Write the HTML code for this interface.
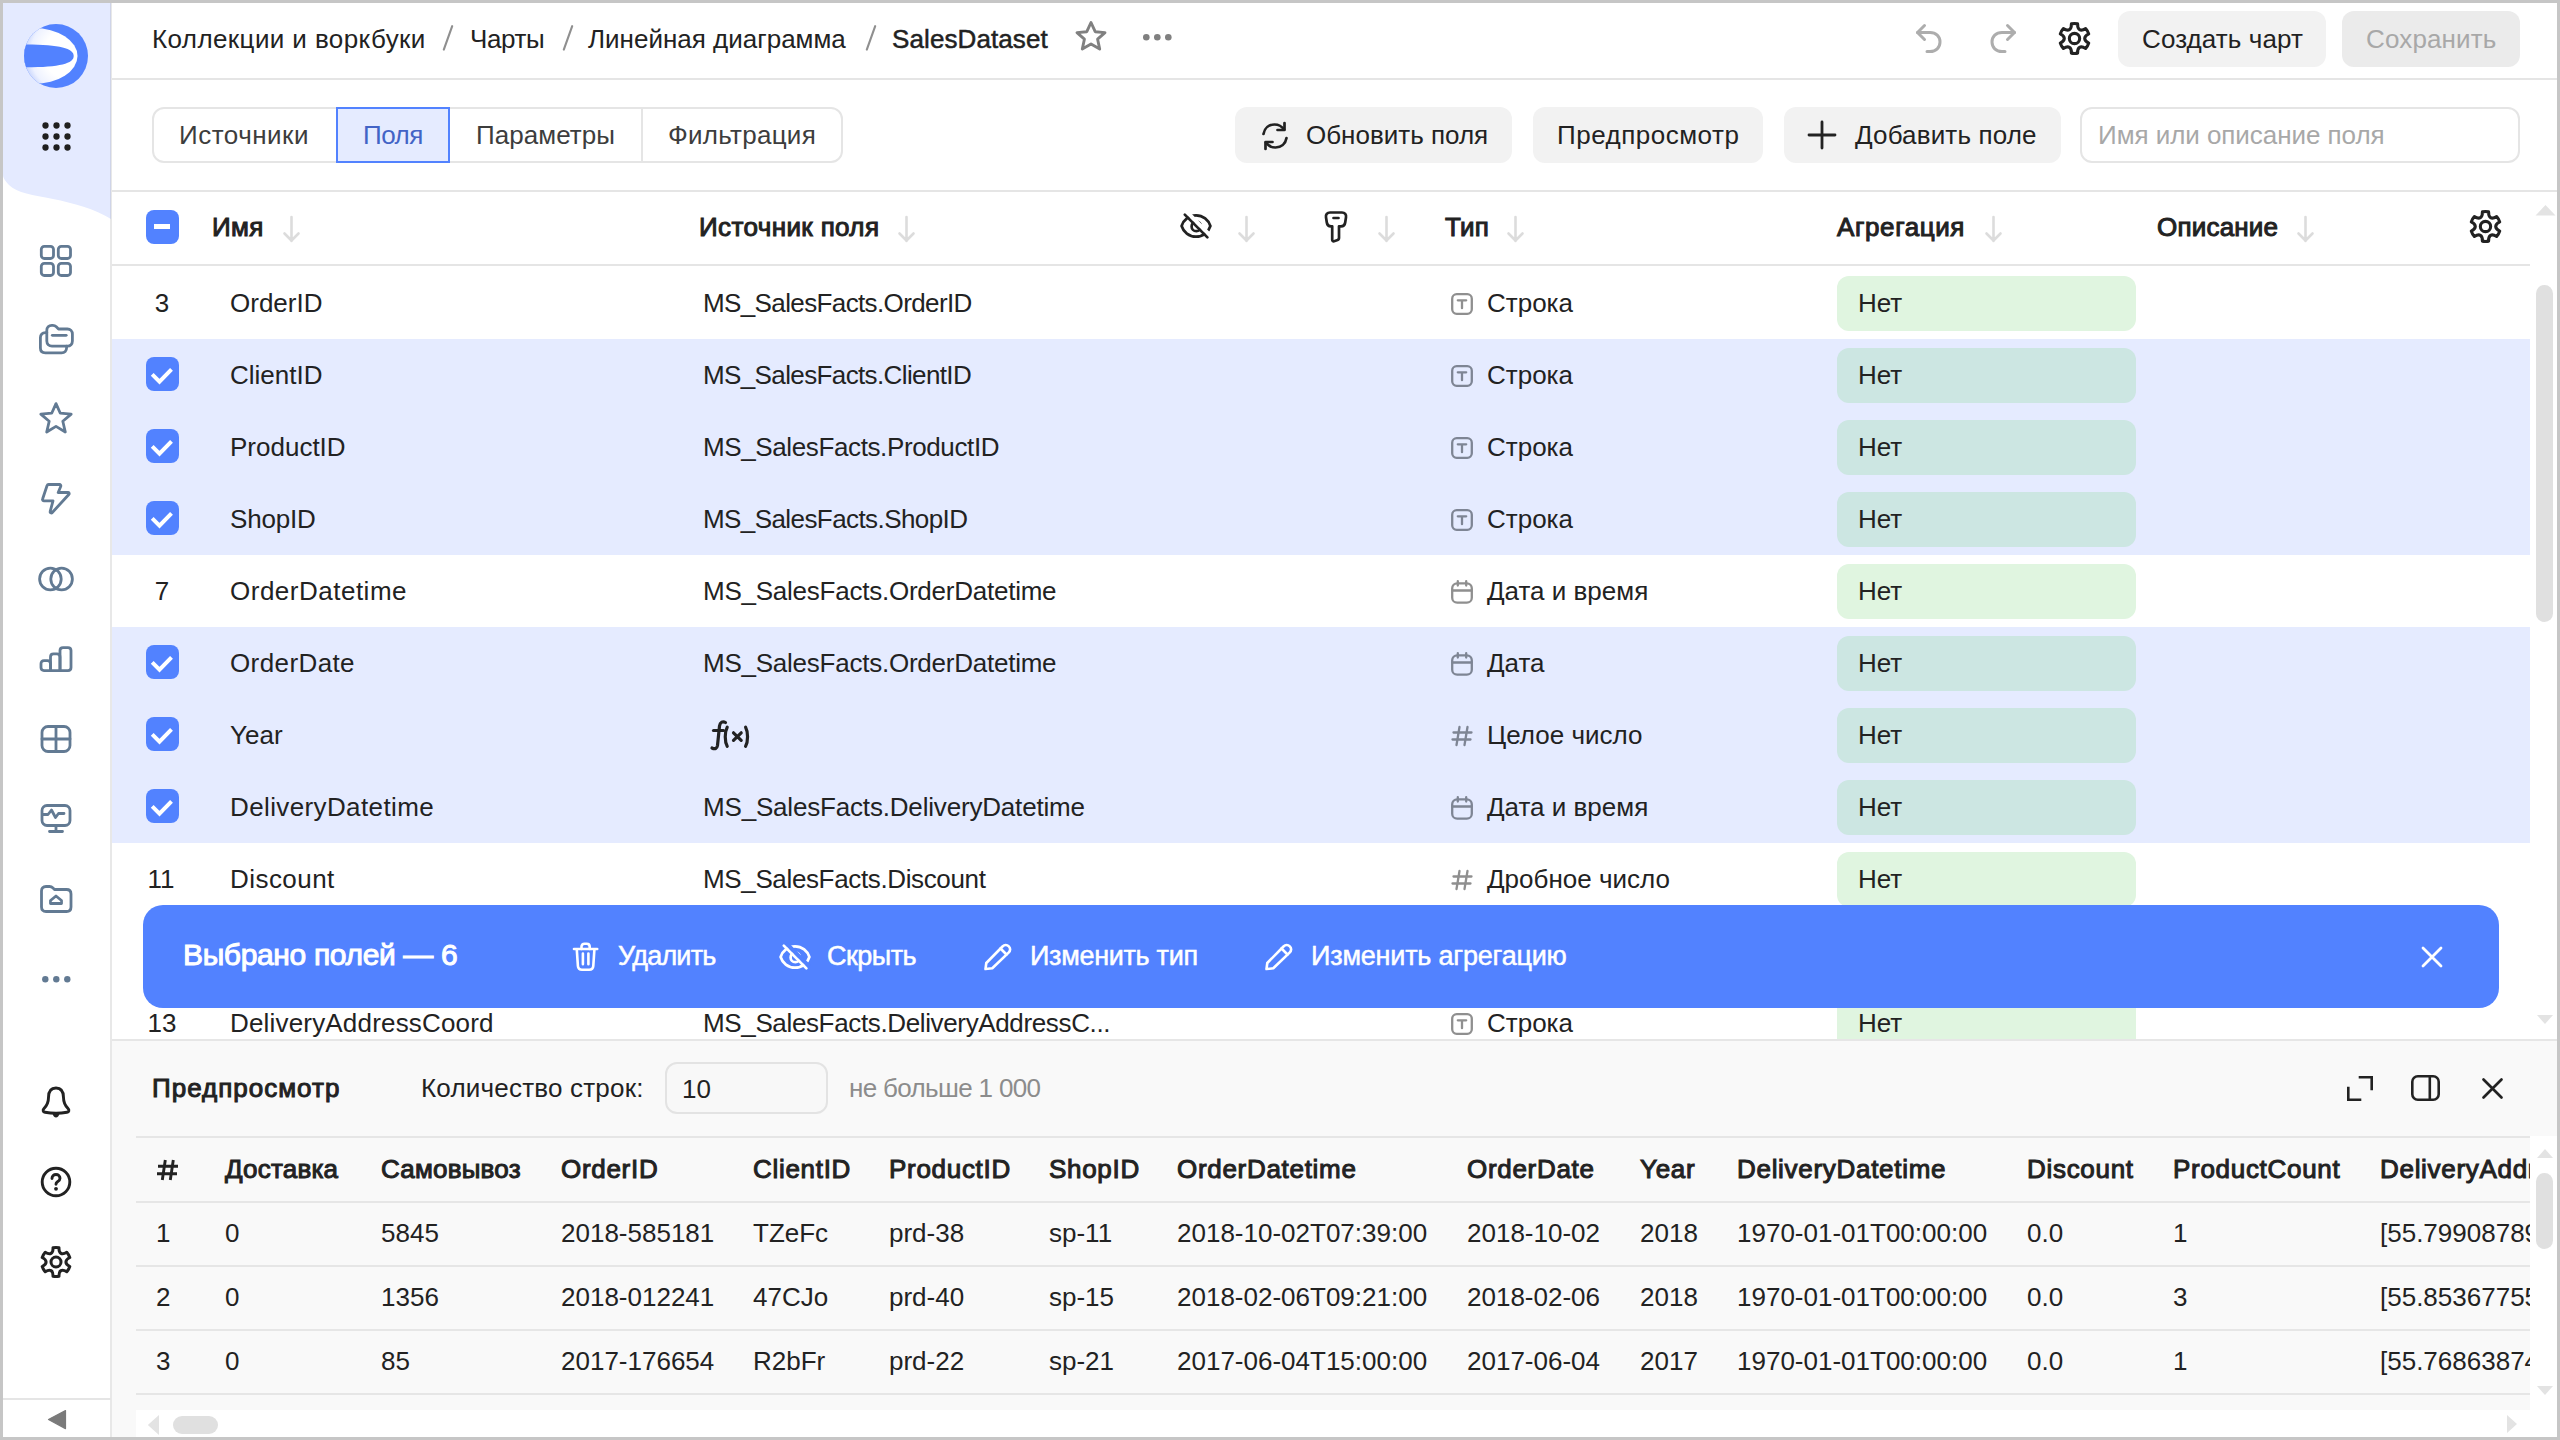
<!DOCTYPE html><html><head><meta charset="utf-8"><style>
*{box-sizing:border-box;margin:0;padding:0}
html,body{width:2560px;height:1440px;overflow:hidden;background:#c6c6c6}
body{font-family:"Liberation Sans",sans-serif;position:relative}
.t{position:absolute;white-space:pre;line-height:1}
.abs{position:absolute}
svg{position:absolute;overflow:visible}
</style></head><body>

<div class="abs" style="left:3px;top:3px;width:2554px;height:1434px;background:#fff;"></div>
<svg style="left:3px;top:3px;" width="109" height="220" viewBox="0 0 109 220"><path d="M0 0 H108 V216 C92 206 70 200 50 196 C30 192 14 190 6 182 C3 179 0 175 0 172 Z" fill="#e4eaff"/></svg>
<div class="abs" style="left:110px;top:3px;width:2px;height:1434px;background:rgba(0,0,0,0.09);"></div>
<svg style="left:24px;top:24px;" width="64" height="64" viewBox="0 0 64 64">
<defs><radialGradient id="lg" gradientUnits="userSpaceOnUse" cx="44" cy="30" r="44"><stop offset="0" stop-color="#fff"/><stop offset="0.55" stop-color="#fff"/><stop offset="0.85" stop-color="#eef2ff"/><stop offset="1" stop-color="#c9d6fc"/></radialGradient>
<clipPath id="lc"><circle cx="32" cy="32" r="32"/></clipPath></defs>
<circle cx="32" cy="32" r="32" fill="#5282ff"/>
<g clip-path="url(#lc)">
<ellipse cx="10" cy="32" rx="43.5" ry="28" fill="url(#lg)"/>
<path d="M-2 20.5 H2 C36 20.5 49.7 24.5 49.7 32 C49.7 39.5 36 43.3 2 43.3 H-2 Z" fill="#5282ff"/>
</g>
</svg>
<svg style="left:41.5px;top:121.5px;" width="7" height="7" viewBox="0 0 7 7"><circle cx="3.5" cy="3.5" r="3.15" fill="#1f1f1f"/></svg>
<svg style="left:41.5px;top:132.5px;" width="7" height="7" viewBox="0 0 7 7"><circle cx="3.5" cy="3.5" r="3.15" fill="#1f1f1f"/></svg>
<svg style="left:41.5px;top:143.5px;" width="7" height="7" viewBox="0 0 7 7"><circle cx="3.5" cy="3.5" r="3.15" fill="#1f1f1f"/></svg>
<svg style="left:52.5px;top:121.5px;" width="7" height="7" viewBox="0 0 7 7"><circle cx="3.5" cy="3.5" r="3.15" fill="#1f1f1f"/></svg>
<svg style="left:52.5px;top:132.5px;" width="7" height="7" viewBox="0 0 7 7"><circle cx="3.5" cy="3.5" r="3.15" fill="#1f1f1f"/></svg>
<svg style="left:52.5px;top:143.5px;" width="7" height="7" viewBox="0 0 7 7"><circle cx="3.5" cy="3.5" r="3.15" fill="#1f1f1f"/></svg>
<svg style="left:63.5px;top:121.5px;" width="7" height="7" viewBox="0 0 7 7"><circle cx="3.5" cy="3.5" r="3.15" fill="#1f1f1f"/></svg>
<svg style="left:63.5px;top:132.5px;" width="7" height="7" viewBox="0 0 7 7"><circle cx="3.5" cy="3.5" r="3.15" fill="#1f1f1f"/></svg>
<svg style="left:63.5px;top:143.5px;" width="7" height="7" viewBox="0 0 7 7"><circle cx="3.5" cy="3.5" r="3.15" fill="#1f1f1f"/></svg>
<svg style="left:40px;top:245px;" width="32" height="32" viewBox="0 0 32 32"><g fill="none" stroke="#627a93" stroke-width="2.8" stroke-linecap="round" stroke-linejoin="round"><rect x="1.3" y="1.3" width="12.2" height="12.2" rx="3"/><rect x="18.3" y="1.3" width="12.2" height="12.2" rx="3"/><rect x="1.3" y="18.3" width="12.2" height="12.2" rx="3"/><rect x="18.3" y="18.3" width="12.2" height="12.2" rx="3"/></g></svg>
<svg style="left:39px;top:324px;" width="36" height="32" viewBox="0 0 36 32"><g fill="none" stroke="#627a93" stroke-width="2.8" stroke-linecap="round" stroke-linejoin="round"><path d="M7.8 10 V17 C7.8 20 10 22.1 13 22.1 H28.4 C31.4 22.1 33.4 20 33.4 17 V10 C33.4 7 31.4 5 28.4 5 H19.5 L17.3 2.8 C16.5 2 15.3 1.4 13.8 1.4 H12.8 C9.8 1.4 7.8 3.5 7.8 6.5 Z"/><path d="M7.8 8.6 H6.4 C3.4 8.6 1.4 10.6 1.4 13.6 V24 C1.4 27 3.4 28.8 6.4 28.8 H22.6 C25.6 28.8 27.6 26.8 27.6 23.8 V22.1"/><path d="M13.3 11.3 H27.2"/></g></svg>
<svg style="left:39px;top:401px;" width="34" height="34" viewBox="0 0 34 34"><path fill="none" stroke="#627a93" stroke-width="2.8" stroke-linecap="round" stroke-linejoin="round" d="M17 2.6 L21.3 12.2 L32.2 13.1 L23.8 20.3 L26.3 31 L17 25.4 L7.7 31 L10.2 20.3 L1.8 13.1 L12.7 12.2 Z"/></svg>
<svg style="left:40px;top:482px;" width="32" height="34" viewBox="0 0 32 34"><path fill="none" stroke="#627a93" stroke-width="2.8" stroke-linecap="round" stroke-linejoin="round" d="M8.5 2.5 H19.5 C20.5 2.5 21 3.3 20.8 4.2 L18.2 10.5 H28 C29 10.5 29.6 11.6 28.8 12.5 L12.3 30.5 C11.3 31.6 9.8 30.6 10.2 29.4 L13 18.8 H4 C3 18.8 2.2 18 2.6 17 L7 3.8 C7.3 3 7.8 2.5 8.5 2.5 Z"/></svg>
<svg style="left:38px;top:566px;" width="36" height="26" viewBox="0 0 36 26"><g fill="none" stroke="#627a93" stroke-width="2.8" stroke-linecap="round" stroke-linejoin="round"><circle cx="12.4" cy="13" r="10.8"/><circle cx="23.6" cy="13" r="10.8"/></g></svg>
<svg style="left:39px;top:645px;" width="34" height="28" viewBox="0 0 34 28"><g fill="none" stroke="#627a93" stroke-width="2.8" stroke-linecap="round" stroke-linejoin="round"><path d="M21 25.6 H29 C31 25.6 32 24.6 32 22.6 V5.6 C32 3.6 31 2.6 29 2.6 H24 C22 2.6 21 3.6 21 5.6 Z"/><path d="M11.5 25.6 H21 V11.9 C21 9.9 20 8.9 18 8.9 H14.5 C12.5 8.9 11.5 9.9 11.5 11.9 Z"/><path d="M11.5 25.6 H5 C3 25.6 2 24.6 2 22.6 V18.7 C2 16.7 3 15.7 5 15.7 H8.5 C10.5 15.7 11.5 16.7 11.5 18.7 Z"/></g></svg>
<svg style="left:40px;top:725px;" width="32" height="28" viewBox="0 0 32 28"><g fill="none" stroke="#627a93" stroke-width="2.8" stroke-linecap="round" stroke-linejoin="round"><rect x="2" y="1.5" width="28" height="25" rx="6"/><path d="M16 1.5 V26.5 M2 14 H30"/></g></svg>
<svg style="left:40px;top:804px;" width="32" height="30" viewBox="0 0 32 30"><g fill="none" stroke="#627a93" stroke-width="2.8" stroke-linecap="round" stroke-linejoin="round"><rect x="2" y="1.5" width="28" height="20" rx="5"/><path d="M16 21.5 V27 M9.5 27.5 H22.5"/><path d="M3 10.5 H8 L11.5 6 L15.5 13.5 L18.5 9.5 H24"/></g></svg>
<svg style="left:39px;top:884px;" width="34" height="30" viewBox="0 0 34 30"><g fill="none" stroke="#627a93" stroke-width="2.8" stroke-linecap="round" stroke-linejoin="round"><path d="M2.5 7 C2.5 4 4 2.5 7 2.5 H10.5 C12 2.5 13 3 14 4 L15.5 5.5 H27.5 C30.5 5.5 32 7 32 10 V23 C32 26 30.5 27.5 27.5 27.5 H7 C4 27.5 2.5 26 2.5 23 Z"/><path d="M11.5 19.5 V16.5 L17 12 L22.5 16.5 V19.5 Z"/></g></svg>
<svg style="left:41.7px;top:976.0px;" width="7" height="7" viewBox="0 0 7 7"><circle cx="3.3" cy="3.3" r="3.2" fill="#627a93"/></svg>
<svg style="left:52.7px;top:976.0px;" width="7" height="7" viewBox="0 0 7 7"><circle cx="3.3" cy="3.3" r="3.2" fill="#627a93"/></svg>
<svg style="left:63.7px;top:976.0px;" width="7" height="7" viewBox="0 0 7 7"><circle cx="3.3" cy="3.3" r="3.2" fill="#627a93"/></svg>
<svg style="left:40px;top:1086px;" width="32" height="34" viewBox="0 0 32 34"><g fill="none" stroke="#222" stroke-width="2.9" stroke-linecap="round" stroke-linejoin="round"><path d="M16 2 C10.5 2 8.5 6.5 8.5 11.5 C8.5 16 7 19.5 4 22.5 C2.5 24 3 26 5 26.3 C12 27.5 20 27.5 27 26.3 C29 26 29.5 24 28 22.5 C25 19.5 23.5 16 23.5 11.5 C23.5 6.5 21.5 2 16 2 Z"/></g><path d="M12.5 27.5 C13 30 14.5 31.5 16 31.5 C17.5 31.5 19 30 19.5 27.5 Z" fill="#222"/></svg>
<svg style="left:40px;top:1166px;" width="32" height="32" viewBox="0 0 32 32"><g fill="none" stroke="#222" stroke-width="2.9" stroke-linecap="round" stroke-linejoin="round"><circle cx="16" cy="16" r="13.8"/><path d="M12 12.5 C12 10 13.8 8.5 16 8.5 C18.2 8.5 20 10 20 12.3 C20 14.5 18.5 15.2 17.2 16 C16.3 16.6 16 17.2 16 18.3"/></g><circle cx="16" cy="22.8" r="1.9" fill="#222"/></svg>
<svg style="left:40px;top:1246px;" width="32" height="32" viewBox="0 0 32 32"><g transform="scale(1.0)" fill="none" stroke="#222" stroke-width="3.0" stroke-linejoin="round"><path d="M12.99 1.82 A14.5 14.5 0 0 1 19.01 1.82 C18.72 7.63 21.89 9.46 26.78 6.30 A14.5 14.5 0 0 1 29.79 11.52 C24.61 14.17 24.61 17.83 29.79 20.48 A14.5 14.5 0 0 1 26.78 25.70 C21.89 22.54 18.72 24.37 19.01 30.18 A14.5 14.5 0 0 1 12.99 30.18 C13.28 24.37 10.11 22.54 5.22 25.70 A14.5 14.5 0 0 1 2.21 20.48 C7.39 17.83 7.39 14.17 2.21 11.52 A14.5 14.5 0 0 1 5.22 6.30 C10.11 9.46 13.28 7.63 12.99 1.82 Z"/><circle cx="16" cy="16" r="5.0"/></g></svg>
<div class="abs" style="left:3px;top:1398px;width:108px;height:2px;background:#e5e5e5;"></div>
<svg style="left:46px;top:1408px;" width="22" height="24" viewBox="0 0 22 24"><path d="M2.5 11.5 L19.5 2.6 V20.6 Z" fill="#7a7a7a" stroke="#7a7a7a" stroke-width="1.2" stroke-linejoin="round"/></svg>
<div class="abs" style="left:112px;top:78px;width:2445px;height:2px;background:#e5e5e5;"></div>
<div class="t" style="left:152px;top:25.99px;font-size:26px;color:#222222;font-weight:400;letter-spacing:0.4px;">Коллекции и воркбуки</div>
<svg style="left:441.5px;top:25px;" width="12" height="26" viewBox="0 0 12 26"><path d="M10.2 1.2 L1.8 24.6" stroke="#8f8f8f" stroke-width="2.1" stroke-linecap="round"/></svg>
<div class="t" style="left:470px;top:25.99px;font-size:26px;color:#222222;font-weight:400;letter-spacing:-0.4px;">Чарты</div>
<svg style="left:562px;top:25px;" width="12" height="26" viewBox="0 0 12 26"><path d="M10.2 1.2 L1.8 24.6" stroke="#8f8f8f" stroke-width="2.1" stroke-linecap="round"/></svg>
<div class="t" style="left:588px;top:25.99px;font-size:26px;color:#222222;font-weight:400;">Линейная диаграмма</div>
<svg style="left:865px;top:25px;" width="12" height="26" viewBox="0 0 12 26"><path d="M10.2 1.2 L1.8 24.6" stroke="#8f8f8f" stroke-width="2.1" stroke-linecap="round"/></svg>
<div class="t" style="left:892px;top:25.99px;font-size:26px;color:#222222;font-weight:400;letter-spacing:0.1px;-webkit-text-stroke:0.5px #222222;">SalesDataset</div>
<svg style="left:1075px;top:20px;" width="32" height="32" viewBox="0 0 32 32"><path fill="none" stroke="#808080" stroke-width="2.9" stroke-linejoin="round" d="M16 2.5 L20.2 11.7 L30 12.6 L22.6 19.2 L24.7 29 L16 24 L7.3 29 L9.4 19.2 L2 12.6 L11.8 11.7 Z"/></svg>
<svg style="left:1142.7px;top:33.900000000000006px;" width="7" height="7" viewBox="0 0 7 7"><circle cx="3.3" cy="3.3" r="3.3" fill="#808080"/></svg>
<svg style="left:1153.7px;top:33.900000000000006px;" width="7" height="7" viewBox="0 0 7 7"><circle cx="3.3" cy="3.3" r="3.3" fill="#808080"/></svg>
<svg style="left:1165.2px;top:33.900000000000006px;" width="7" height="7" viewBox="0 0 7 7"><circle cx="3.3" cy="3.3" r="3.3" fill="#808080"/></svg>
<svg style="left:1914px;top:22px;" width="32" height="32" viewBox="0 0 32 32"><g fill="none" stroke="#adadad" stroke-width="3" stroke-linecap="round" stroke-linejoin="round"><path d="M10.5 3.5 L3.5 10.5 L10.5 17.5"/><path d="M3.5 10.5 H16 C22 10.5 26 14.5 26 20 C26 25.5 22 29.5 16 29.5 H13"/></g></svg>
<svg style="left:1986px;top:22px;" width="32" height="32" viewBox="0 0 32 32"><g fill="none" stroke="#adadad" stroke-width="3" stroke-linecap="round" stroke-linejoin="round" transform="translate(32,0) scale(-1,1)"><path d="M10.5 3.5 L3.5 10.5 L10.5 17.5"/><path d="M3.5 10.5 H16 C22 10.5 26 14.5 26 20 C26 25.5 22 29.5 16 29.5 H13"/></g></svg>
<svg style="left:2058px;top:22px;" width="33" height="33" viewBox="0 0 33 33"><g transform="scale(1.03125)" fill="none" stroke="#222" stroke-width="3.0060606060606063" stroke-linejoin="round"><path d="M12.99 1.82 A14.5 14.5 0 0 1 19.01 1.82 C18.72 7.63 21.89 9.46 26.78 6.30 A14.5 14.5 0 0 1 29.79 11.52 C24.61 14.17 24.61 17.83 29.79 20.48 A14.5 14.5 0 0 1 26.78 25.70 C21.89 22.54 18.72 24.37 19.01 30.18 A14.5 14.5 0 0 1 12.99 30.18 C13.28 24.37 10.11 22.54 5.22 25.70 A14.5 14.5 0 0 1 2.21 20.48 C7.39 17.83 7.39 14.17 2.21 11.52 A14.5 14.5 0 0 1 5.22 6.30 C10.11 9.46 13.28 7.63 12.99 1.82 Z"/><circle cx="16" cy="16" r="5.0"/></g></svg>
<div class="abs" style="left:2118px;top:11px;width:208px;height:56px;background:#f2f2f2;border-radius:12px;"></div>
<div class="t" style="left:2142px;top:25.99px;font-size:26px;color:#222222;font-weight:400;letter-spacing:0.1px;">Создать чарт</div>
<div class="abs" style="left:2342px;top:11px;width:178px;height:56px;background:#ebebeb;border-radius:12px;"></div>
<div class="t" style="left:2366px;top:25.99px;font-size:26px;color:#a8a8a8;font-weight:400;letter-spacing:0.15px;">Сохранить</div>
<div class="abs" style="left:112px;top:190px;width:2445px;height:2px;background:#e5e5e5;"></div>
<div class="abs" style="left:152px;top:107px;width:691px;height:56px;border:2px solid #e5e5e5;border-radius:12px"></div>
<div class="abs" style="left:641px;top:109px;width:2px;height:52px;background:#e5e5e5;"></div>
<div class="abs" style="left:336px;top:107px;width:114px;height:56px;border:2px solid #5282ff;background:#e5ebff"></div>
<div class="t" style="left:179px;top:121.99px;font-size:26px;color:#3d3d3d;font-weight:400;letter-spacing:0.5px;">Источники</div>
<div class="t" style="left:363px;top:121.99px;font-size:26px;color:#4263c6;font-weight:400;letter-spacing:-0.5px;">Поля</div>
<div class="t" style="left:476px;top:121.99px;font-size:26px;color:#3d3d3d;font-weight:400;letter-spacing:0.05px;">Параметры</div>
<div class="t" style="left:668px;top:121.99px;font-size:26px;color:#3d3d3d;font-weight:400;letter-spacing:0.27px;">Фильтрация</div>
<div class="abs" style="left:1235px;top:107px;width:277px;height:56px;background:#f2f2f2;border-radius:12px;"></div>
<svg style="left:1259px;top:120px;" width="32" height="32" viewBox="0 0 32 32"><g fill="none" stroke="#222" stroke-width="2.7" stroke-linecap="round" stroke-linejoin="round"><path d="M4.5 14 C5.5 8 10 4.5 15.5 4.5 C19.5 4.5 23 6.5 25 9.5"/><path d="M25.5 3 V10 H18.5"/><path d="M27.5 18 C26.5 24 22 27.5 16.5 27.5 C12.5 27.5 9 25.5 7 22.5"/><path d="M6.5 29 V22 H13.5"/></g></svg>
<div class="t" style="left:1306px;top:121.99px;font-size:26px;color:#222222;font-weight:400;letter-spacing:0.0px;">Обновить поля</div>
<div class="abs" style="left:1533px;top:107px;width:230px;height:56px;background:#f2f2f2;border-radius:12px;"></div>
<div class="t" style="left:1557px;top:121.99px;font-size:26px;color:#222222;font-weight:400;letter-spacing:0.5px;">Предпросмотр</div>
<div class="abs" style="left:1784px;top:107px;width:277px;height:56px;background:#f2f2f2;border-radius:12px;"></div>
<svg style="left:1806px;top:119px;" width="32" height="32" viewBox="0 0 32 32"><g stroke="#222" stroke-width="2.8" stroke-linecap="round"><path d="M16 3 V29 M3 16 H29"/></g></svg>
<div class="t" style="left:1855px;top:121.99px;font-size:26px;color:#222222;font-weight:400;letter-spacing:0.15px;">Добавить поле</div>
<div class="abs" style="left:2080px;top:107px;width:440px;height:56px;border:2px solid #e5e5e5;border-radius:12px"></div>
<div class="t" style="left:2098px;top:121.99px;font-size:26px;color:#a8a8a8;font-weight:400;letter-spacing:-0.05px;">Имя или описание поля</div>
<div class="abs" style="left:112px;top:264px;width:2418px;height:2px;background:#e5e5e5;"></div>
<div class="abs" style="left:146px;top:210px;width:33px;height:34px;background:#5282ff;border-radius:8px;"></div>
<div class="abs" style="left:154px;top:224px;width:16px;height:5px;background:#fff;"></div>
<div class="t" style="left:212px;top:213.99px;font-size:26px;color:#222222;font-weight:400;letter-spacing:0.3px;-webkit-text-stroke:1.0px #222222;">Имя</div>
<svg style="left:282px;top:215px;" width="19" height="28" viewBox="0 0 19 28"><path d="M9.5 2 V26 M2.5 18.5 L9.5 25.5 L16.5 18.5" fill="none" stroke="#dcdcdc" stroke-width="2.6" stroke-linecap="round" stroke-linejoin="round"/></svg>
<div class="t" style="left:699px;top:213.99px;font-size:26px;color:#222222;font-weight:400;letter-spacing:0.38px;-webkit-text-stroke:1.0px #222222;">Источник поля</div>
<svg style="left:897px;top:215px;" width="19" height="28" viewBox="0 0 19 28"><path d="M9.5 2 V26 M2.5 18.5 L9.5 25.5 L16.5 18.5" fill="none" stroke="#dcdcdc" stroke-width="2.6" stroke-linecap="round" stroke-linejoin="round"/></svg>
<svg style="left:1179px;top:211px;" width="34" height="30" viewBox="0 0 34 30"><g fill="none" stroke-linecap="round" stroke-linejoin="round"><path stroke="#222" stroke-width="2.7" d="M2.6 15 C4.4 9 10 4.3 17 4.3 C24 4.3 29.6 9 31.4 15 C29.6 21 24 25.7 17 25.7 C10 25.7 4.4 21 2.6 15 Z"/><circle stroke="#222" stroke-width="2.7" cx="17.3" cy="15.4" r="4.7"/><path stroke="#fff" stroke-width="4.2" stroke-linecap="butt" d="M8.6 1.8 L31.2 24.6"/><path stroke="#222" stroke-width="2.7" d="M5.8 3.6 L28.4 26.4"/></g></svg>
<svg style="left:1237px;top:215px;" width="19" height="28" viewBox="0 0 19 28"><path d="M9.5 2 V26 M2.5 18.5 L9.5 25.5 L16.5 18.5" fill="none" stroke="#dcdcdc" stroke-width="2.6" stroke-linecap="round" stroke-linejoin="round"/></svg>
<svg style="left:1324px;top:211px;" width="24" height="32" viewBox="0 0 24 32"><g fill="none" stroke="#222" stroke-width="2.7" stroke-linecap="round" stroke-linejoin="round"><path d="M6 1.5 H18 C20.8 1.5 22.5 3.5 22 6.3 L21.2 11.5 C20.9 13.8 19.5 15.3 17 15.3 H15 V27 C15 28.3 14.2 29 13 29.3 L10 30.2 C9 30.5 8.2 29.8 8.2 28.8 V15.3 H7 C4.5 15.3 3.1 13.8 2.8 11.5 L2 6.3 C1.5 3.5 3.2 1.5 6 1.5 Z"/><path d="M9.5 7 H14.5"/></g></svg>
<svg style="left:1377px;top:215px;" width="19" height="28" viewBox="0 0 19 28"><path d="M9.5 2 V26 M2.5 18.5 L9.5 25.5 L16.5 18.5" fill="none" stroke="#dcdcdc" stroke-width="2.6" stroke-linecap="round" stroke-linejoin="round"/></svg>
<div class="t" style="left:1445px;top:213.99px;font-size:26px;color:#222222;font-weight:400;letter-spacing:0.2px;-webkit-text-stroke:1.0px #222222;">Тип</div>
<svg style="left:1506px;top:215px;" width="19" height="28" viewBox="0 0 19 28"><path d="M9.5 2 V26 M2.5 18.5 L9.5 25.5 L16.5 18.5" fill="none" stroke="#dcdcdc" stroke-width="2.6" stroke-linecap="round" stroke-linejoin="round"/></svg>
<div class="t" style="left:1837px;top:213.99px;font-size:26px;color:#222222;font-weight:400;letter-spacing:0.6px;-webkit-text-stroke:1.0px #222222;">Агрегация</div>
<svg style="left:1984px;top:215px;" width="19" height="28" viewBox="0 0 19 28"><path d="M9.5 2 V26 M2.5 18.5 L9.5 25.5 L16.5 18.5" fill="none" stroke="#dcdcdc" stroke-width="2.6" stroke-linecap="round" stroke-linejoin="round"/></svg>
<div class="t" style="left:2157px;top:213.99px;font-size:26px;color:#222222;font-weight:400;letter-spacing:0.2px;-webkit-text-stroke:1.0px #222222;">Описание</div>
<svg style="left:2296px;top:215px;" width="19" height="28" viewBox="0 0 19 28"><path d="M9.5 2 V26 M2.5 18.5 L9.5 25.5 L16.5 18.5" fill="none" stroke="#dcdcdc" stroke-width="2.6" stroke-linecap="round" stroke-linejoin="round"/></svg>
<svg style="left:2469px;top:210px;" width="33" height="33" viewBox="0 0 33 33"><g transform="scale(1.03125)" fill="none" stroke="#222" stroke-width="3.0060606060606063" stroke-linejoin="round"><path d="M12.99 1.82 A14.5 14.5 0 0 1 19.01 1.82 C18.72 7.63 21.89 9.46 26.78 6.30 A14.5 14.5 0 0 1 29.79 11.52 C24.61 14.17 24.61 17.83 29.79 20.48 A14.5 14.5 0 0 1 26.78 25.70 C21.89 22.54 18.72 24.37 19.01 30.18 A14.5 14.5 0 0 1 12.99 30.18 C13.28 24.37 10.11 22.54 5.22 25.70 A14.5 14.5 0 0 1 2.21 20.48 C7.39 17.83 7.39 14.17 2.21 11.52 A14.5 14.5 0 0 1 5.22 6.30 C10.11 9.46 13.28 7.63 12.99 1.82 Z"/><circle cx="16" cy="16" r="5.0"/></g></svg>
<div class="abs" style="left:112px;top:266px;width:2418px;height:773px;overflow:hidden">
<div class="t" style="left:42.75px;top:23.99px;font-size:26px;color:#222222;font-weight:400;">3</div>
<div class="t" style="left:118px;top:23.99px;font-size:26px;color:#222222;font-weight:400;letter-spacing:0px;">OrderID</div>
<div class="t" style="left:591px;top:23.99px;font-size:26px;color:#222222;font-weight:400;letter-spacing:-0.62px;">MS_SalesFacts.OrderID</div>
<svg style="left:1339px;top:26.5px;" width="22" height="22" viewBox="0 0 22 22"><rect x="1.2" y="1.2" width="19.6" height="19.6" rx="4.5" fill="none" stroke="#8f8f8f" stroke-width="2.3"/><path d="M6.8 7.3 H15.2 M11 7.3 V15.2" stroke="#8f8f8f" stroke-width="2.3" stroke-linecap="round"/></svg>
<div class="t" style="left:1375px;top:23.99px;font-size:26px;color:#222222;font-weight:400;">Строка</div>
<div class="abs" style="left:1725px;top:10px;width:299px;height:55px;background:#e0f5e0;border-radius:12px;"></div>
<div class="t" style="left:1746px;top:23.99px;font-size:26px;color:#222222;font-weight:400;">Нет</div>
<div class="abs" style="left:0px;top:73px;width:2418px;height:72px;background:#e5ebff;"></div>
<div class="abs" style="left:34px;top:91px;width:33px;height:34px;background:#5282ff;border-radius:8px;"></div>
<svg style="left:34px;top:91px;" width="33" height="34" viewBox="0 0 33 34"><path d="M6.2 17.4 L13.5 24.6 L25.5 12.4" fill="none" stroke="#fff" stroke-width="4"/></svg>
<div class="t" style="left:118px;top:95.99px;font-size:26px;color:#222222;font-weight:400;letter-spacing:0px;">ClientID</div>
<div class="t" style="left:591px;top:95.99px;font-size:26px;color:#222222;font-weight:400;letter-spacing:-0.62px;">MS_SalesFacts.ClientID</div>
<svg style="left:1339px;top:98.5px;" width="22" height="22" viewBox="0 0 22 22"><rect x="1.2" y="1.2" width="19.6" height="19.6" rx="4.5" fill="none" stroke="#7e8594" stroke-width="2.3"/><path d="M6.8 7.3 H15.2 M11 7.3 V15.2" stroke="#7e8594" stroke-width="2.3" stroke-linecap="round"/></svg>
<div class="t" style="left:1375px;top:95.99px;font-size:26px;color:#222222;font-weight:400;">Строка</div>
<div class="abs" style="left:1725px;top:82px;width:299px;height:55px;background:#cce6e2;border-radius:12px;"></div>
<div class="t" style="left:1746px;top:95.99px;font-size:26px;color:#222222;font-weight:400;">Нет</div>
<div class="abs" style="left:0px;top:145px;width:2418px;height:72px;background:#e5ebff;"></div>
<div class="abs" style="left:34px;top:163px;width:33px;height:34px;background:#5282ff;border-radius:8px;"></div>
<svg style="left:34px;top:163px;" width="33" height="34" viewBox="0 0 33 34"><path d="M6.2 17.4 L13.5 24.6 L25.5 12.4" fill="none" stroke="#fff" stroke-width="4"/></svg>
<div class="t" style="left:118px;top:167.99px;font-size:26px;color:#222222;font-weight:400;letter-spacing:0px;">ProductID</div>
<div class="t" style="left:591px;top:167.99px;font-size:26px;color:#222222;font-weight:400;letter-spacing:-0.38px;">MS_SalesFacts.ProductID</div>
<svg style="left:1339px;top:170.5px;" width="22" height="22" viewBox="0 0 22 22"><rect x="1.2" y="1.2" width="19.6" height="19.6" rx="4.5" fill="none" stroke="#7e8594" stroke-width="2.3"/><path d="M6.8 7.3 H15.2 M11 7.3 V15.2" stroke="#7e8594" stroke-width="2.3" stroke-linecap="round"/></svg>
<div class="t" style="left:1375px;top:167.99px;font-size:26px;color:#222222;font-weight:400;">Строка</div>
<div class="abs" style="left:1725px;top:154px;width:299px;height:55px;background:#cce6e2;border-radius:12px;"></div>
<div class="t" style="left:1746px;top:167.99px;font-size:26px;color:#222222;font-weight:400;">Нет</div>
<div class="abs" style="left:0px;top:217px;width:2418px;height:72px;background:#e5ebff;"></div>
<div class="abs" style="left:34px;top:235px;width:33px;height:34px;background:#5282ff;border-radius:8px;"></div>
<svg style="left:34px;top:235px;" width="33" height="34" viewBox="0 0 33 34"><path d="M6.2 17.4 L13.5 24.6 L25.5 12.4" fill="none" stroke="#fff" stroke-width="4"/></svg>
<div class="t" style="left:118px;top:239.99px;font-size:26px;color:#222222;font-weight:400;letter-spacing:-0.2px;">ShopID</div>
<div class="t" style="left:591px;top:239.99px;font-size:26px;color:#222222;font-weight:400;letter-spacing:-0.58px;">MS_SalesFacts.ShopID</div>
<svg style="left:1339px;top:242.5px;" width="22" height="22" viewBox="0 0 22 22"><rect x="1.2" y="1.2" width="19.6" height="19.6" rx="4.5" fill="none" stroke="#7e8594" stroke-width="2.3"/><path d="M6.8 7.3 H15.2 M11 7.3 V15.2" stroke="#7e8594" stroke-width="2.3" stroke-linecap="round"/></svg>
<div class="t" style="left:1375px;top:239.99px;font-size:26px;color:#222222;font-weight:400;">Строка</div>
<div class="abs" style="left:1725px;top:226px;width:299px;height:55px;background:#cce6e2;border-radius:12px;"></div>
<div class="t" style="left:1746px;top:239.99px;font-size:26px;color:#222222;font-weight:400;">Нет</div>
<div class="t" style="left:42.75px;top:311.99px;font-size:26px;color:#222222;font-weight:400;">7</div>
<div class="t" style="left:118px;top:311.99px;font-size:26px;color:#222222;font-weight:400;letter-spacing:0.5px;">OrderDatetime</div>
<div class="t" style="left:591px;top:311.99px;font-size:26px;color:#222222;font-weight:400;letter-spacing:-0.24px;">MS_SalesFacts.OrderDatetime</div>
<svg style="left:1339px;top:313.5px;" width="22" height="24" viewBox="0 0 22 24"><g fill="none" stroke="#8f8f8f" stroke-width="2.3" stroke-linecap="round"><rect x="1.2" y="3.3" width="19.6" height="19.4" rx="5"/><path d="M1.5 10.5 H20.5 M6.8 1.2 V5.5 M15.2 1.2 V5.5"/></g></svg>
<div class="t" style="left:1375px;top:311.99px;font-size:26px;color:#222222;font-weight:400;">Дата и время</div>
<div class="abs" style="left:1725px;top:298px;width:299px;height:55px;background:#e0f5e0;border-radius:12px;"></div>
<div class="t" style="left:1746px;top:311.99px;font-size:26px;color:#222222;font-weight:400;">Нет</div>
<div class="abs" style="left:0px;top:361px;width:2418px;height:72px;background:#e5ebff;"></div>
<div class="abs" style="left:34px;top:379px;width:33px;height:34px;background:#5282ff;border-radius:8px;"></div>
<svg style="left:34px;top:379px;" width="33" height="34" viewBox="0 0 33 34"><path d="M6.2 17.4 L13.5 24.6 L25.5 12.4" fill="none" stroke="#fff" stroke-width="4"/></svg>
<div class="t" style="left:118px;top:383.99px;font-size:26px;color:#222222;font-weight:400;letter-spacing:0.4px;">OrderDate</div>
<div class="t" style="left:591px;top:383.99px;font-size:26px;color:#222222;font-weight:400;letter-spacing:-0.24px;">MS_SalesFacts.OrderDatetime</div>
<svg style="left:1339px;top:385.5px;" width="22" height="24" viewBox="0 0 22 24"><g fill="none" stroke="#7e8594" stroke-width="2.3" stroke-linecap="round"><rect x="1.2" y="3.3" width="19.6" height="19.4" rx="5"/><path d="M1.5 10.5 H20.5 M6.8 1.2 V5.5 M15.2 1.2 V5.5"/></g></svg>
<div class="t" style="left:1375px;top:383.99px;font-size:26px;color:#222222;font-weight:400;">Дата</div>
<div class="abs" style="left:1725px;top:370px;width:299px;height:55px;background:#cce6e2;border-radius:12px;"></div>
<div class="t" style="left:1746px;top:383.99px;font-size:26px;color:#222222;font-weight:400;">Нет</div>
<div class="abs" style="left:0px;top:433px;width:2418px;height:72px;background:#e5ebff;"></div>
<div class="abs" style="left:34px;top:451px;width:33px;height:34px;background:#5282ff;border-radius:8px;"></div>
<svg style="left:34px;top:451px;" width="33" height="34" viewBox="0 0 33 34"><path d="M6.2 17.4 L13.5 24.6 L25.5 12.4" fill="none" stroke="#fff" stroke-width="4"/></svg>
<div class="t" style="left:118px;top:455.99px;font-size:26px;color:#222222;font-weight:400;letter-spacing:0px;">Year</div>
<svg style="left:598px;top:454px;" width="42" height="32" viewBox="0 0 42 32"><g fill="none" stroke="#222" stroke-width="3.2" stroke-linecap="round"><path d="M15.5 2.5 C13 1 10 2 9.5 6 L7.5 25.5 C7 28.5 5 29.5 2 28"/><path d="M3.5 10.5 H13.5"/><path d="M17.2 7.2 C14.6 12 14.6 21.5 17.2 26.3"/><path d="M35.6 7.2 C38.2 12 38.2 21.5 35.6 26.3"/><path d="M23.5 12.8 L31.2 20.3 M31.2 12.8 L23.5 20.3"/></g></svg>
<svg style="left:1339px;top:458.5px;" width="22" height="22" viewBox="0 0 22 22"><g fill="none" stroke="#7e8594" stroke-width="2.3" stroke-linecap="round"><path d="M8.5 2 L5.5 20 M16.5 2 L13.5 20 M2.5 7.5 H20.5 M1.5 14.5 H19.5"/></g></svg>
<div class="t" style="left:1375px;top:455.99px;font-size:26px;color:#222222;font-weight:400;">Целое число</div>
<div class="abs" style="left:1725px;top:442px;width:299px;height:55px;background:#cce6e2;border-radius:12px;"></div>
<div class="t" style="left:1746px;top:455.99px;font-size:26px;color:#222222;font-weight:400;">Нет</div>
<div class="abs" style="left:0px;top:505px;width:2418px;height:72px;background:#e5ebff;"></div>
<div class="abs" style="left:34px;top:523px;width:33px;height:34px;background:#5282ff;border-radius:8px;"></div>
<svg style="left:34px;top:523px;" width="33" height="34" viewBox="0 0 33 34"><path d="M6.2 17.4 L13.5 24.6 L25.5 12.4" fill="none" stroke="#fff" stroke-width="4"/></svg>
<div class="t" style="left:118px;top:527.99px;font-size:26px;color:#222222;font-weight:400;letter-spacing:0.38px;">DeliveryDatetime</div>
<div class="t" style="left:591px;top:527.99px;font-size:26px;color:#222222;font-weight:400;letter-spacing:-0.18px;">MS_SalesFacts.DeliveryDatetime</div>
<svg style="left:1339px;top:529.5px;" width="22" height="24" viewBox="0 0 22 24"><g fill="none" stroke="#7e8594" stroke-width="2.3" stroke-linecap="round"><rect x="1.2" y="3.3" width="19.6" height="19.4" rx="5"/><path d="M1.5 10.5 H20.5 M6.8 1.2 V5.5 M15.2 1.2 V5.5"/></g></svg>
<div class="t" style="left:1375px;top:527.99px;font-size:26px;color:#222222;font-weight:400;">Дата и время</div>
<div class="abs" style="left:1725px;top:514px;width:299px;height:55px;background:#cce6e2;border-radius:12px;"></div>
<div class="t" style="left:1746px;top:527.99px;font-size:26px;color:#222222;font-weight:400;">Нет</div>
<div class="t" style="left:35.5px;top:599.99px;font-size:26px;color:#222222;font-weight:400;">11</div>
<div class="t" style="left:118px;top:599.99px;font-size:26px;color:#222222;font-weight:400;letter-spacing:0.45px;">Discount</div>
<div class="t" style="left:591px;top:599.99px;font-size:26px;color:#222222;font-weight:400;letter-spacing:-0.36px;">MS_SalesFacts.Discount</div>
<svg style="left:1339px;top:602.5px;" width="22" height="22" viewBox="0 0 22 22"><g fill="none" stroke="#8f8f8f" stroke-width="2.3" stroke-linecap="round"><path d="M8.5 2 L5.5 20 M16.5 2 L13.5 20 M2.5 7.5 H20.5 M1.5 14.5 H19.5"/></g></svg>
<div class="t" style="left:1375px;top:599.99px;font-size:26px;color:#222222;font-weight:400;">Дробное число</div>
<div class="abs" style="left:1725px;top:586px;width:299px;height:55px;background:#e0f5e0;border-radius:12px;"></div>
<div class="t" style="left:1746px;top:599.99px;font-size:26px;color:#222222;font-weight:400;">Нет</div>
<div class="t" style="left:35.5px;top:671.99px;font-size:26px;color:#222222;font-weight:400;">12</div>
<div class="t" style="left:118px;top:671.99px;font-size:26px;color:#222222;font-weight:400;letter-spacing:0px;">ProductCount</div>
<div class="t" style="left:591px;top:671.99px;font-size:26px;color:#222222;font-weight:400;letter-spacing:0px;">MS_SalesFacts.ProductCount</div>
<svg style="left:1339px;top:674.5px;" width="22" height="22" viewBox="0 0 22 22"><g fill="none" stroke="#8f8f8f" stroke-width="2.3" stroke-linecap="round"><path d="M8.5 2 L5.5 20 M16.5 2 L13.5 20 M2.5 7.5 H20.5 M1.5 14.5 H19.5"/></g></svg>
<div class="t" style="left:1375px;top:671.99px;font-size:26px;color:#222222;font-weight:400;">Целое число</div>
<div class="abs" style="left:1725px;top:658px;width:299px;height:55px;background:#e0f5e0;border-radius:12px;"></div>
<div class="t" style="left:1746px;top:671.99px;font-size:26px;color:#222222;font-weight:400;">Нет</div>
<div class="t" style="left:35.5px;top:743.99px;font-size:26px;color:#222222;font-weight:400;">13</div>
<div class="t" style="left:118px;top:743.99px;font-size:26px;color:#222222;font-weight:400;letter-spacing:0.18px;">DeliveryAddressCoord</div>
<div class="t" style="left:591px;top:743.99px;font-size:26px;color:#222222;font-weight:400;letter-spacing:-0.36px;">MS_SalesFacts.DeliveryAddressC...</div>
<svg style="left:1339px;top:746.5px;" width="22" height="22" viewBox="0 0 22 22"><rect x="1.2" y="1.2" width="19.6" height="19.6" rx="4.5" fill="none" stroke="#8f8f8f" stroke-width="2.3"/><path d="M6.8 7.3 H15.2 M11 7.3 V15.2" stroke="#8f8f8f" stroke-width="2.3" stroke-linecap="round"/></svg>
<div class="t" style="left:1375px;top:743.99px;font-size:26px;color:#222222;font-weight:400;">Строка</div>
<div class="abs" style="left:1725px;top:730px;width:299px;height:55px;background:#e0f5e0;border-radius:12px;"></div>
<div class="t" style="left:1746px;top:743.99px;font-size:26px;color:#222222;font-weight:400;">Нет</div>
</div>
<svg style="left:2535px;top:204px;" width="21" height="12" viewBox="0 0 21 12"><path d="M0.5 11.5 L10.5 1 L20.5 11.5 Z" fill="#e3e3e3"/></svg>
<div class="abs" style="left:2536px;top:285px;width:17px;height:337px;background:#e0e0e0;border-radius:8.5px;"></div>
<svg style="left:2536px;top:1014px;" width="18" height="12" viewBox="0 0 18 12"><path d="M1 1 L9 10 L17 1 Z" fill="#e3e3e3"/></svg>
<div class="abs" style="left:143px;top:905px;width:2356px;height:103px;background:#5282ff;border-radius:20px;"></div>
<div class="t" style="left:183px;top:939.61px;font-size:30px;color:#fff;font-weight:400;letter-spacing:-0.35px;-webkit-text-stroke:1.0px #fff;">Выбрано полей — 6</div>
<svg style="left:571px;top:940px;" width="30" height="34" viewBox="0 0 30 34"><g fill="none" stroke="#fff" stroke-width="2.6" stroke-linecap="round" stroke-linejoin="round"><path d="M3 9 H26.2"/><path d="M10.5 9 V6.8 C10.5 4.8 11.8 3.8 13.5 3.8 H15.7 C17.4 3.8 18.7 4.8 18.7 6.8 V9"/><path d="M5.8 9.5 L6.9 25.8 C7.1 28.4 8.5 29.7 11 29.7 H18.2 C20.7 29.7 22.1 28.4 22.3 25.8 L23.4 9.5"/><path d="M11.9 13.5 V24.3 M17.4 13.5 V24.3"/></g></svg>
<div class="t" style="left:618px;top:943.14px;font-size:27px;color:#fff;font-weight:400;letter-spacing:-0.8px;-webkit-text-stroke:0.5px #fff;">Удалить</div>
<svg style="left:778px;top:942px;" width="34" height="30" viewBox="0 0 34 30"><g fill="none" stroke-linecap="round" stroke-linejoin="round"><path stroke="#fff" stroke-width="2.7" d="M2.6 15 C4.4 9 10 4.3 17 4.3 C24 4.3 29.6 9 31.4 15 C29.6 21 24 25.7 17 25.7 C10 25.7 4.4 21 2.6 15 Z"/><circle stroke="#fff" stroke-width="2.7" cx="17.3" cy="15.4" r="4.7"/><path stroke="#5282ff" stroke-width="4.2" stroke-linecap="butt" d="M8.6 1.8 L31.2 24.6"/><path stroke="#fff" stroke-width="2.7" d="M5.8 3.6 L28.4 26.4"/></g></svg>
<div class="t" style="left:827px;top:943.14px;font-size:27px;color:#fff;font-weight:400;letter-spacing:-0.5px;-webkit-text-stroke:0.5px #fff;">Скрыть</div>
<svg style="left:982px;top:940px;" width="32" height="34" viewBox="0 0 32 34"><g fill="none" stroke="#fff" stroke-width="2.6" stroke-linecap="round" stroke-linejoin="round"><path d="M3.5 29 L4.3 23 L20.5 6.5 C22.5 4.5 25 4.5 26.8 6.3 C28.6 8.1 28.6 10.6 26.6 12.6 L10.3 28.3 Z"/><path d="M18.5 8.5 L24.5 14.5"/></g></svg>
<div class="t" style="left:1030px;top:943.14px;font-size:27px;color:#fff;font-weight:400;letter-spacing:-0.3px;-webkit-text-stroke:0.5px #fff;">Изменить тип</div>
<svg style="left:1263px;top:940px;" width="32" height="34" viewBox="0 0 32 34"><g fill="none" stroke="#fff" stroke-width="2.6" stroke-linecap="round" stroke-linejoin="round"><path d="M3.5 29 L4.3 23 L20.5 6.5 C22.5 4.5 25 4.5 26.8 6.3 C28.6 8.1 28.6 10.6 26.6 12.6 L10.3 28.3 Z"/><path d="M18.5 8.5 L24.5 14.5"/></g></svg>
<div class="t" style="left:1311px;top:943.14px;font-size:27px;color:#fff;font-weight:400;letter-spacing:-0.2px;-webkit-text-stroke:0.5px #fff;">Изменить агрегацию</div>
<svg style="left:2421px;top:946px;" width="22" height="22" viewBox="0 0 22 22"><path d="M2 2 L20 20 M20 2 L2 20" stroke="#fff" stroke-width="2.8" stroke-linecap="round"/></svg>
<div class="abs" style="left:112px;top:1040px;width:2445px;height:397px;background:#f9f9f9;"></div>
<div class="abs" style="left:112px;top:1039px;width:2445px;height:1.5px;background:#e6e6e6;"></div>
<div class="t" style="left:152px;top:1074.99px;font-size:26px;color:#222222;font-weight:400;letter-spacing:1.0px;-webkit-text-stroke:1.0px #222222;">Предпросмотр</div>
<div class="t" style="left:421px;top:1074.99px;font-size:26px;color:#222222;font-weight:400;letter-spacing:0.2px;">Количество строк:</div>
<div class="abs" style="left:665px;top:1062px;width:163px;height:52px;border:2px solid #e3e3e3;border-radius:12px;background:#f8f8f8"></div>
<div class="t" style="left:682px;top:1075.99px;font-size:26px;color:#222222;font-weight:400;">10</div>
<div class="t" style="left:849px;top:1074.99px;font-size:26px;color:#8c8c8c;font-weight:400;letter-spacing:-0.65px;">не больше 1 000</div>
<svg style="left:2347px;top:1076px;" width="26" height="25" viewBox="0 0 26 25"><g fill="none" stroke="#222" stroke-width="2.6" stroke-linecap="square"><path d="M1.3 12 V23.7 H13"/><path d="M13 1.3 H24.7 V13"/></g></svg>
<svg style="left:2411px;top:1075px;" width="29" height="26" viewBox="0 0 29 26"><g fill="none" stroke="#222" stroke-width="2.6"><rect x="1.3" y="1.3" width="26.4" height="23.4" rx="5.5"/><path d="M18.8 1.5 V24.5"/></g></svg>
<svg style="left:2482px;top:1078px;" width="21" height="21" viewBox="0 0 21 21"><path d="M1.5 1.5 L19.5 19.5 M19.5 1.5 L1.5 19.5" stroke="#222" stroke-width="2.7" stroke-linecap="round"/></svg>
<div class="abs" style="left:136px;top:1136px;width:2394px;height:2px;background:#e6e6e6;"></div>
<div class="abs" style="left:136px;top:1201px;width:2394px;height:2px;background:#e6e6e6;"></div>
<div class="abs" style="left:136px;top:1265px;width:2394px;height:2px;background:#e6e6e6;"></div>
<div class="abs" style="left:136px;top:1329px;width:2394px;height:2px;background:#e6e6e6;"></div>
<div class="abs" style="left:136px;top:1393px;width:2394px;height:2px;background:#e6e6e6;"></div>
<div class="abs" style="left:136px;top:1136px;width:2394px;height:274px;overflow:hidden">
<svg style="left:20px;top:23px;" width="23" height="22" viewBox="0 0 23 22"><g stroke="#222" stroke-width="2.9" stroke-linecap="butt"><path d="M9.3 1 L6.3 21 M17.3 1 L14.3 21 M2 7.2 H22 M1 14.8 H21"/></g></svg>
<div class="t" style="left:20px;top:83.99px;font-size:26px;color:#222222;font-weight:400;letter-spacing:0px;">1</div>
<div class="t" style="left:20px;top:147.99px;font-size:26px;color:#222222;font-weight:400;letter-spacing:0px;">2</div>
<div class="t" style="left:20px;top:211.99px;font-size:26px;color:#222222;font-weight:400;letter-spacing:0px;">3</div>
<div class="t" style="left:89px;top:19.99px;font-size:26px;color:#222222;font-weight:400;letter-spacing:0.2px;-webkit-text-stroke:1.0px #222222;">Доставка</div>
<div class="t" style="left:89px;top:83.99px;font-size:26px;color:#222222;font-weight:400;letter-spacing:0px;">0</div>
<div class="t" style="left:89px;top:147.99px;font-size:26px;color:#222222;font-weight:400;letter-spacing:0px;">0</div>
<div class="t" style="left:89px;top:211.99px;font-size:26px;color:#222222;font-weight:400;letter-spacing:0px;">0</div>
<div class="t" style="left:245px;top:19.99px;font-size:26px;color:#222222;font-weight:400;letter-spacing:0.2px;-webkit-text-stroke:1.0px #222222;">Самовывоз</div>
<div class="t" style="left:245px;top:83.99px;font-size:26px;color:#222222;font-weight:400;letter-spacing:0px;">5845</div>
<div class="t" style="left:245px;top:147.99px;font-size:26px;color:#222222;font-weight:400;letter-spacing:0px;">1356</div>
<div class="t" style="left:245px;top:211.99px;font-size:26px;color:#222222;font-weight:400;letter-spacing:0px;">85</div>
<div class="t" style="left:425px;top:19.99px;font-size:26px;color:#222222;font-weight:400;letter-spacing:0.7px;-webkit-text-stroke:1.0px #222222;">OrderID</div>
<div class="t" style="left:425px;top:83.99px;font-size:26px;color:#222222;font-weight:400;letter-spacing:0px;">2018-585181</div>
<div class="t" style="left:425px;top:147.99px;font-size:26px;color:#222222;font-weight:400;letter-spacing:0px;">2018-012241</div>
<div class="t" style="left:425px;top:211.99px;font-size:26px;color:#222222;font-weight:400;letter-spacing:0px;">2017-176654</div>
<div class="t" style="left:617px;top:19.99px;font-size:26px;color:#222222;font-weight:400;letter-spacing:0.7px;-webkit-text-stroke:1.0px #222222;">ClientID</div>
<div class="t" style="left:617px;top:83.99px;font-size:26px;color:#222222;font-weight:400;letter-spacing:0px;">TZeFc</div>
<div class="t" style="left:617px;top:147.99px;font-size:26px;color:#222222;font-weight:400;letter-spacing:0px;">47CJo</div>
<div class="t" style="left:617px;top:211.99px;font-size:26px;color:#222222;font-weight:400;letter-spacing:0px;">R2bFr</div>
<div class="t" style="left:753px;top:19.99px;font-size:26px;color:#222222;font-weight:400;letter-spacing:0.7px;-webkit-text-stroke:1.0px #222222;">ProductID</div>
<div class="t" style="left:753px;top:83.99px;font-size:26px;color:#222222;font-weight:400;letter-spacing:0px;">prd-38</div>
<div class="t" style="left:753px;top:147.99px;font-size:26px;color:#222222;font-weight:400;letter-spacing:0px;">prd-40</div>
<div class="t" style="left:753px;top:211.99px;font-size:26px;color:#222222;font-weight:400;letter-spacing:0px;">prd-22</div>
<div class="t" style="left:913px;top:19.99px;font-size:26px;color:#222222;font-weight:400;letter-spacing:0.7px;-webkit-text-stroke:1.0px #222222;">ShopID</div>
<div class="t" style="left:913px;top:83.99px;font-size:26px;color:#222222;font-weight:400;letter-spacing:0px;">sp-11</div>
<div class="t" style="left:913px;top:147.99px;font-size:26px;color:#222222;font-weight:400;letter-spacing:0px;">sp-15</div>
<div class="t" style="left:913px;top:211.99px;font-size:26px;color:#222222;font-weight:400;letter-spacing:0px;">sp-21</div>
<div class="t" style="left:1041px;top:19.99px;font-size:26px;color:#222222;font-weight:400;letter-spacing:0.7px;-webkit-text-stroke:1.0px #222222;">OrderDatetime</div>
<div class="t" style="left:1041px;top:83.99px;font-size:26px;color:#222222;font-weight:400;letter-spacing:0px;">2018-10-02T07:39:00</div>
<div class="t" style="left:1041px;top:147.99px;font-size:26px;color:#222222;font-weight:400;letter-spacing:0px;">2018-02-06T09:21:00</div>
<div class="t" style="left:1041px;top:211.99px;font-size:26px;color:#222222;font-weight:400;letter-spacing:0px;">2017-06-04T15:00:00</div>
<div class="t" style="left:1331px;top:19.99px;font-size:26px;color:#222222;font-weight:400;letter-spacing:0.7px;-webkit-text-stroke:1.0px #222222;">OrderDate</div>
<div class="t" style="left:1331px;top:83.99px;font-size:26px;color:#222222;font-weight:400;letter-spacing:0px;">2018-10-02</div>
<div class="t" style="left:1331px;top:147.99px;font-size:26px;color:#222222;font-weight:400;letter-spacing:0px;">2018-02-06</div>
<div class="t" style="left:1331px;top:211.99px;font-size:26px;color:#222222;font-weight:400;letter-spacing:0px;">2017-06-04</div>
<div class="t" style="left:1504px;top:19.99px;font-size:26px;color:#222222;font-weight:400;letter-spacing:0.7px;-webkit-text-stroke:1.0px #222222;">Year</div>
<div class="t" style="left:1504px;top:83.99px;font-size:26px;color:#222222;font-weight:400;letter-spacing:0px;">2018</div>
<div class="t" style="left:1504px;top:147.99px;font-size:26px;color:#222222;font-weight:400;letter-spacing:0px;">2018</div>
<div class="t" style="left:1504px;top:211.99px;font-size:26px;color:#222222;font-weight:400;letter-spacing:0px;">2017</div>
<div class="t" style="left:1601px;top:19.99px;font-size:26px;color:#222222;font-weight:400;letter-spacing:0.7px;-webkit-text-stroke:1.0px #222222;">DeliveryDatetime</div>
<div class="t" style="left:1601px;top:83.99px;font-size:26px;color:#222222;font-weight:400;letter-spacing:0px;">1970-01-01T00:00:00</div>
<div class="t" style="left:1601px;top:147.99px;font-size:26px;color:#222222;font-weight:400;letter-spacing:0px;">1970-01-01T00:00:00</div>
<div class="t" style="left:1601px;top:211.99px;font-size:26px;color:#222222;font-weight:400;letter-spacing:0px;">1970-01-01T00:00:00</div>
<div class="t" style="left:1891px;top:19.99px;font-size:26px;color:#222222;font-weight:400;letter-spacing:0.7px;-webkit-text-stroke:1.0px #222222;">Discount</div>
<div class="t" style="left:1891px;top:83.99px;font-size:26px;color:#222222;font-weight:400;letter-spacing:0px;">0.0</div>
<div class="t" style="left:1891px;top:147.99px;font-size:26px;color:#222222;font-weight:400;letter-spacing:0px;">0.0</div>
<div class="t" style="left:1891px;top:211.99px;font-size:26px;color:#222222;font-weight:400;letter-spacing:0px;">0.0</div>
<div class="t" style="left:2037px;top:19.99px;font-size:26px;color:#222222;font-weight:400;letter-spacing:0.7px;-webkit-text-stroke:1.0px #222222;">ProductCount</div>
<div class="t" style="left:2037px;top:83.99px;font-size:26px;color:#222222;font-weight:400;letter-spacing:0px;">1</div>
<div class="t" style="left:2037px;top:147.99px;font-size:26px;color:#222222;font-weight:400;letter-spacing:0px;">3</div>
<div class="t" style="left:2037px;top:211.99px;font-size:26px;color:#222222;font-weight:400;letter-spacing:0px;">1</div>
<div class="t" style="left:2244px;top:19.99px;font-size:26px;color:#222222;font-weight:400;letter-spacing:0.7px;-webkit-text-stroke:1.0px #222222;">DeliveryAddressCoord</div>
<div class="t" style="left:2244px;top:83.99px;font-size:26px;color:#222222;font-weight:400;letter-spacing:0px;">[55.79908789</div>
<div class="t" style="left:2244px;top:147.99px;font-size:26px;color:#222222;font-weight:400;letter-spacing:0px;">[55.85367755</div>
<div class="t" style="left:2244px;top:211.99px;font-size:26px;color:#222222;font-weight:400;letter-spacing:0px;">[55.76863874</div>
</div>
<div class="abs" style="left:2530px;top:1136px;width:27px;height:301px;background:#fff;"></div>
<div class="abs" style="left:136px;top:1410px;width:2394px;height:27px;background:#fff;"></div>
<svg style="left:2536px;top:1147px;" width="18" height="12" viewBox="0 0 18 12"><path d="M1 11 L9 2 L17 11 Z" fill="#e3e3e3"/></svg>
<div class="abs" style="left:2536px;top:1173px;width:17px;height:76px;background:#e0e0e0;border-radius:8.5px;"></div>
<svg style="left:2536px;top:1385px;" width="18" height="12" viewBox="0 0 18 12"><path d="M1 1 L9 10 L17 1 Z" fill="#e3e3e3"/></svg>
<svg style="left:147px;top:1414px;" width="13" height="22" viewBox="0 0 13 22"><path d="M12 1 L0.8 11 L12 21 Z" fill="#e3e3e3"/></svg>
<div class="abs" style="left:173px;top:1416px;width:45px;height:18px;background:#e0e0e0;border-radius:9px;"></div>
<svg style="left:2506px;top:1414px;" width="13" height="20" viewBox="0 0 13 20"><path d="M1 1 L11 10 L1 19 Z" fill="#e3e3e3"/></svg>
</body></html>
